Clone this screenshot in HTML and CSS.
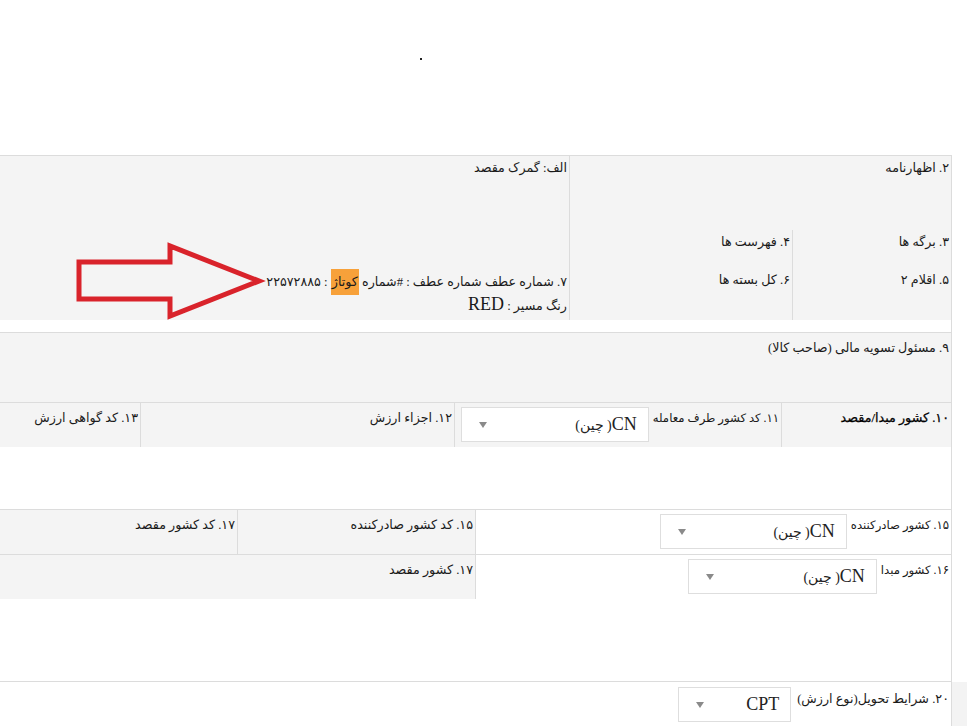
FILE: index.html
```html
<!DOCTYPE html>
<html lang="fa">
<head>
  <meta charset="utf-8">
  <link rel="stylesheet" href="styles.css">
  <title>اظهارنامه</title>
</head>
<body>
  <div class="top"><span class="dot"></span></div>

  <div class="sheet">
    <div class="main">

      <section class="block block-head">
        <div class="head-grid">
          <div class="head-main">
            <div class="line">۲. اظهارنامه</div>
            <div class="sub-grid">
              <div class="sub-col sub-col-first">
                <div class="line">۳. برگه ها</div>
                <div class="line">۵. اقلام ۲</div>
              </div>
              <div class="sub-col">
                <div class="line">۴. فهرست ها</div>
                <div class="line">۶. کل بسته ها</div>
              </div>
            </div>
          </div>
          <div class="head-customs">
            <div class="line">الف: گمرک مقصد</div>
            <div class="line ref-line">۷. شماره عطف شماره عطف : #شماره <span class="mark">کوتاژ</span> : ۲۲۵۷۲۸۸۵</div>
            <div class="line">رنگ مسیر : <span class="latin">RED</span></div>
          </div>
        </div>
        <svg class="arrow" width="200" height="84" viewBox="0 0 200 84">
          <polygon points="9,23 100,23 100,7 189,42 100,77 100,60 9,60" fill="none" stroke="#d9232b" stroke-width="5" stroke-linejoin="miter"/>
        </svg>
      </section>

      <section class="block block-finance">
        <div class="finance-title"><div class="line">۹. مسئول تسویه مالی (صاحب کالا)</div></div>
        <div class="row">
          <div class="cell cell-a"><div class="line strong">۱۰. کشور مبدا/مقصد</div></div>
          <div class="cell cell-b">
            <span class="small-label">۱۱. کد کشور طرف معامله</span>
            <div class="select select-trade"><span class="select-value"><span class="latin">CN</span>( چین)</span><span class="caret"></span></div>
          </div>
          <div class="cell cell-c"><div class="line">۱۲. اجزاء ارزش</div></div>
          <div class="cell cell-d"><div class="line">۱۳. کد گواهی ارزش</div></div>
        </div>
      </section>

      <section class="block block-country">
        <div class="row">
          <div class="cell cell-wide plain">
            <span class="small-label">۱۵. کشور صادرکننده</span>
            <div class="select select-export"><span class="select-value"><span class="latin">CN</span>( چین)</span><span class="caret"></span></div>
          </div>
          <div class="cell cell-half"><div class="line">۱۵. کد کشور صادرکننده</div></div>
          <div class="cell cell-last"><div class="line">۱۷. کد کشور مقصد</div></div>
        </div>
        <div class="row">
          <div class="cell cell-wide plain">
            <span class="small-label">۱۶. کشور مبدا</span>
            <div class="select select-origin"><span class="select-value"><span class="latin">CN</span>( چین)</span><span class="caret"></span></div>
          </div>
          <div class="cell cell-rest"><div class="line">۱۷. کشور مقصد</div></div>
        </div>
      </section>

      <section class="block block-terms">
        <div class="row row-terms">
          <div class="cell cell-full plain">
            <span class="terms-label">۲۰. شرایط تحویل(نوع ارزش)</span>
            <div class="select select-terms"><span class="select-value"><span class="latin">CPT</span></span><span class="caret"></span></div>
          </div>
        </div>
      </section>

    </div>
    <div class="gutter"><div class="gutter-fill"></div></div>
  </div>
</body>
</html>
```

FILE: styles.css
```css
body {
  margin: 0;
  font-family: "Liberation Serif", "DejaVu Sans", serif;
  font-size: 12.7px;
  color: #1a1a1a;
  background: #fff;
}
.top {
  height: 155px;
}
.dot {
  display: block;
  width: 2px;
  height: 2px;
  margin-left: 420px;
  position: relative;
  top: 58px;
  background: #222;
}
.sheet {
  display: flex;
}
.main {
  width: 951px;
  border-right: 1px solid #dcdcdc;
  direction: rtl;
}
.gutter {
  flex: 1;
  display: flex;
  flex-direction: column;
  justify-content: flex-end;
}
.gutter-fill {
  height: 44px;
  background: #f3f3f3;
}
.block {
  border-top: 1px solid #dcdcdc;
}
.line {
  line-height: 25px;
  height: 25px;
  padding-right: 2px;
  white-space: nowrap;
}
.latin {
  font-size: 18px;
  line-height: 1;
}

/* header block */
.block-head {
  position: relative;
  margin-bottom: 12px;
}
.head-grid {
  display: flex;
  height: 164px;
  background: #f4f4f4;
}
.head-main {
  width: 381px;
  border-left: 1px solid #dcdcdc;
}
.sub-grid {
  display: flex;
  margin-top: 49px;
  height: 90px;
}
.sub-col {
  flex: 1;
  display: flex;
  flex-direction: column;
  gap: 13px;
}
.sub-col-first {
  flex: none;
  width: 158px;
  border-left: 1px solid #dcdcdc;
}
.head-customs {
  flex: 1;
}
.ref-line {
  margin-top: 88px;
}
.mark {
  display: inline-block;
  line-height: 26px;
  padding: 0 1px;
  background: #f7a13a;
}
.arrow {
  position: absolute;
  left: 70px;
  top: 83px;
}

/* finance block */
.block-finance {
  margin-bottom: 62px;
}
.finance-title {
  height: 69px;
  padding-top: 3px;
  box-sizing: border-box;
  background: #f4f4f4;
}
.row {
  display: flex;
  height: 44px;
  border-top: 1px solid #dcdcdc;
}
.block-country .row:first-child {
  border-top: none;
}
.cell {
  display: flex;
  align-items: flex-start;
  gap: 4px;
  padding-top: 3px;
  box-sizing: border-box;
  background: #f4f4f4;
  border-left: 1px solid #dcdcdc;
}
.cell.plain {
  background: #fff;
}
.cell-a { width: 170px; }
.cell-b { width: 327px; }
.cell-c { width: 314px; }
.cell-d { width: 140px; border-left: none; }
.strong {
  color: #000;
  -webkit-text-stroke: 0.25px #000;
}
.small-label {
  font-size: 11.7px;
  line-height: 26px;
  padding-right: 2px;
  white-space: nowrap;
}
.select {
  display: flex;
  align-items: center;
  justify-content: space-between;
  height: 35px;
  box-sizing: border-box;
  margin-top: 1px;
  padding: 0 11px 0 17px;
  border: 1px solid #dedede;
  background: #fff;
}
.select-value {
  font-size: 14px;
  color: #222;
  white-space: nowrap;
}
.caret {
  width: 0;
  height: 0;
  border-left: 4px solid transparent;
  border-right: 4px solid transparent;
  border-top: 6px solid #8a8a8a;
}
.select-trade { width: 188px; }
.select-export { width: 187px; }
.select-origin { width: 189px; }
.select-terms { width: 113px; }

/* country block */
.block-country {
  margin-bottom: 82px;
}
.cell-wide { width: 476px; }
.cell-half { width: 238px; }
.cell-last { width: 237px; border-left: none; }
.cell-rest { flex: 1; border-left: none; }

/* terms block */
.row-terms {
  border-top: none;
}
.cell-full {
  flex: 1;
  border-left: none;
  padding-top: 4px;
}
.terms-label {
  line-height: 26px;
  padding-right: 2px;
  margin-left: 2px;
  white-space: nowrap;
}
```
